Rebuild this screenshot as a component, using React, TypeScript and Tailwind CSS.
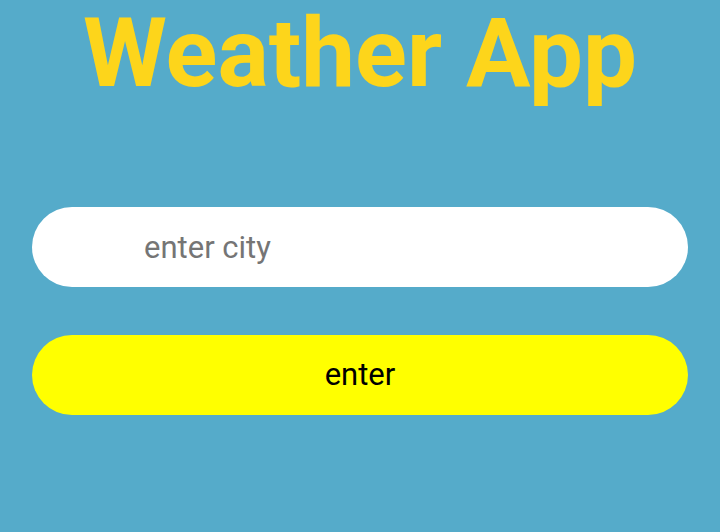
import React, { useState } from 'react';

export default function App() {
  const [city, setCity] = useState('');

  return (
    <div className="w-[720px] h-[532px] bg-[#55abca] flex flex-col items-center px-8 overflow-hidden" style={{ fontFamily: 'Roboto, "Liberation Sans", sans-serif' }}>
      <h1 className="text-[96px] leading-[106px] font-bold text-[#fdd51b] whitespace-nowrap">Weather App</h1>
      <input
        type="text"
        value={city}
        onChange={(e) => setCity(e.target.value)}
        placeholder="enter city"
        className="mt-[101px] w-full h-[80px] rounded-full bg-white pl-[112px] text-[31px] text-gray-800 placeholder:text-[#757575] outline-none"
      />
      <button className="mt-[48px] w-full h-[80px] rounded-full bg-[#ffff00] text-[31px] text-black">enter</button>
    </div>
  );
}
